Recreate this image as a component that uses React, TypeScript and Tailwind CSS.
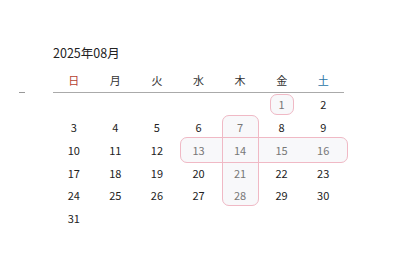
import React from "react";

const weekdays = ["日", "月", "火", "水", "木", "金", "土"];

// August 2025 starts on Friday
const cells: (number | null)[] = [
  null, null, null, null, null, 1, 2,
  3, 4, 5, 6, 7, 8, 9,
  10, 11, 12, 13, 14, 15, 16,
  17, 18, 19, 20, 21, 22, 23,
  24, 25, 26, 27, 28, 29, 30,
  31, null, null, null, null, null, null,
];

const marked = [1, 7, 13, 14, 15, 16, 21, 28];

const colStart = ["col-start-1", "col-start-2", "col-start-3", "col-start-4", "col-start-5", "col-start-6", "col-start-7"];
const rowStart = ["row-start-1", "row-start-2", "row-start-3", "row-start-4", "row-start-5", "row-start-6"];

// highlight areas, placed on the same grid as the dates
const boxes = [
  "col-start-6 row-start-1 ml-[9px] mr-[8.5px] my-px",
  "col-start-4 col-span-4 row-start-3 ml-[2px] mr-[-4px] my-[-1.5px]",
  "col-start-5 row-start-2 row-span-4 ml-[3px] mr-[2px] mt-[-1px] mb-px",
];

export default function App() {
  return (
    <div
      className="w-[400px] h-[271px] bg-white overflow-hidden pl-[19px] pt-[44px]"
      style={{ fontFamily: '"Noto Sans CJK JP", "Noto Sans", sans-serif' }}
    >
      {/* title */}
      <div className="ml-[34px] text-[12.5px] leading-[18px] text-[#222]">2025年08月</div>

      {/* weekday header */}
      <div className="flex items-end mt-[6px]">
        <div className="w-[6px] h-px bg-[#999]" />
        <div className="ml-[28px] w-[291px] grid grid-cols-7 border-b border-[#aaa]">
          {weekdays.map((d, i) => (
            <div
              key={d}
              className={
                "h-[24px] flex items-center justify-center text-[11px] " +
                (i === 0 ? "text-[#b5402f]" : i === 6 ? "text-[#2b74a6]" : "text-[#333]")
              }
            >
              {d}
            </div>
          ))}
        </div>
      </div>

      {/* dates */}
      <div className="ml-[34px] w-[291px] grid grid-cols-7 auto-rows-[22.8px]">
        {boxes.map((b) => (
          <div key={"f" + b} className={b + " rounded-[7px] bg-[#f8f8fa]"} />
        ))}
        {boxes.map((b) => (
          <div key={"o" + b} className={b + " rounded-[7px] border-[1.5px] border-[#f0b9c5]"} />
        ))}
        {cells.map((n, i) => (
          <div
            key={i}
            className={
              colStart[i % 7] + " " + rowStart[Math.floor(i / 7)] +
              " flex items-center justify-center text-[11px] " +
              (n !== null && marked.includes(n) ? "text-[#777]" : "text-[#222]")
            }
          >
            {n ?? ""}
          </div>
        ))}
      </div>
    </div>
  );
}
